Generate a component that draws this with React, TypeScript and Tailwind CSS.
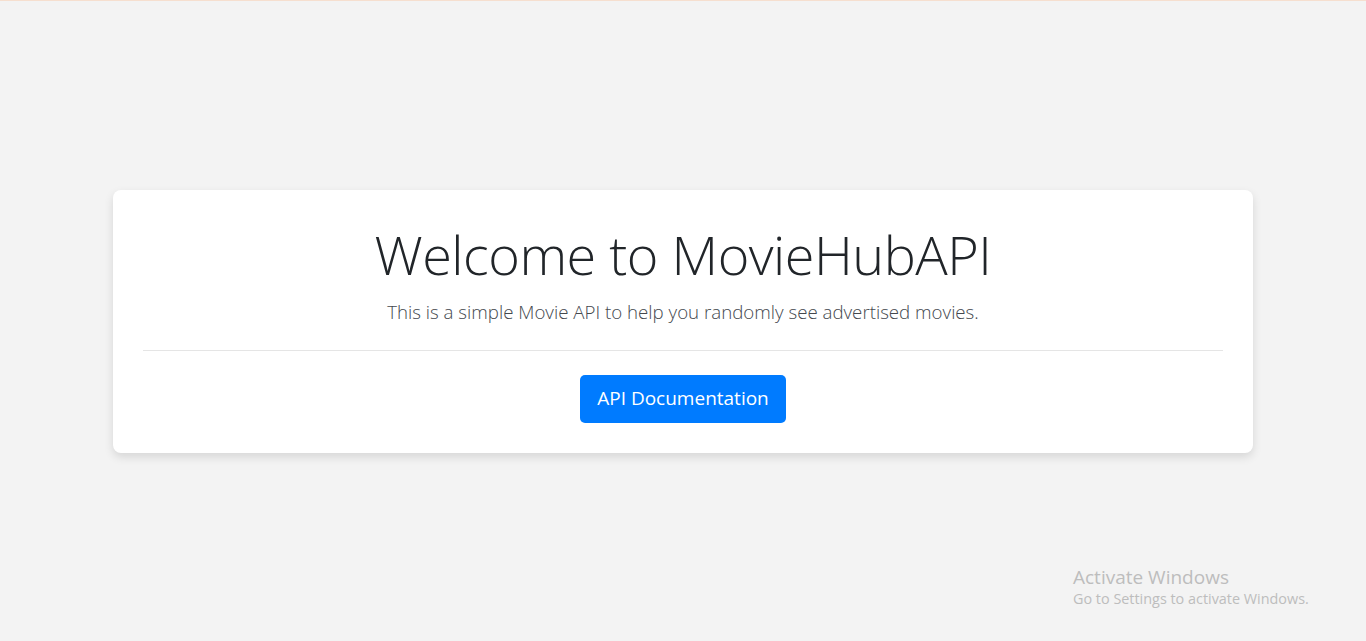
import React from "react";

export default function App() {
  return (
    <div
      className="relative min-h-[641px] w-full bg-[#f3f3f3] border-t border-[#f6dfcf] flex items-center justify-center"
      style={{ fontFamily: '"Open Sans", "Liberation Sans", sans-serif' }}
    >
      <div className="w-[1140px] h-[263px] bg-white rounded-lg shadow-[0_4px_10px_rgba(0,0,0,0.12)] px-[30px] pt-[32px] pb-[30px] flex flex-col items-center">
        <h1 className="text-[54px] font-light leading-[1.2] text-[#212529] tracking-[-0.5px]">
          Welcome to MovieHubAPI
        </h1>
        <p className="mt-[12px] text-[18.7px] font-light leading-[1.5] text-[#44484e]">
          This is a simple Movie API to help you randomly see advertised movies.
        </p>
        <div className="mt-[24px] w-full h-px bg-[#e5e5e5]" />
        <button className="mt-[24px] h-[48px] px-[17px] rounded-[5px] bg-[#007bff] text-white text-[19px] leading-none">
          API Documentation
        </button>
      </div>
      <div className="absolute left-[1073px] top-[564px] text-[#bdbdbd]">
        <div className="text-[19px] leading-[24px]">Activate Windows</div>
        <div className="text-[14.4px] leading-[18px] mt-[1px]">Go to Settings to activate Windows.</div>
      </div>
    </div>
  );
}
